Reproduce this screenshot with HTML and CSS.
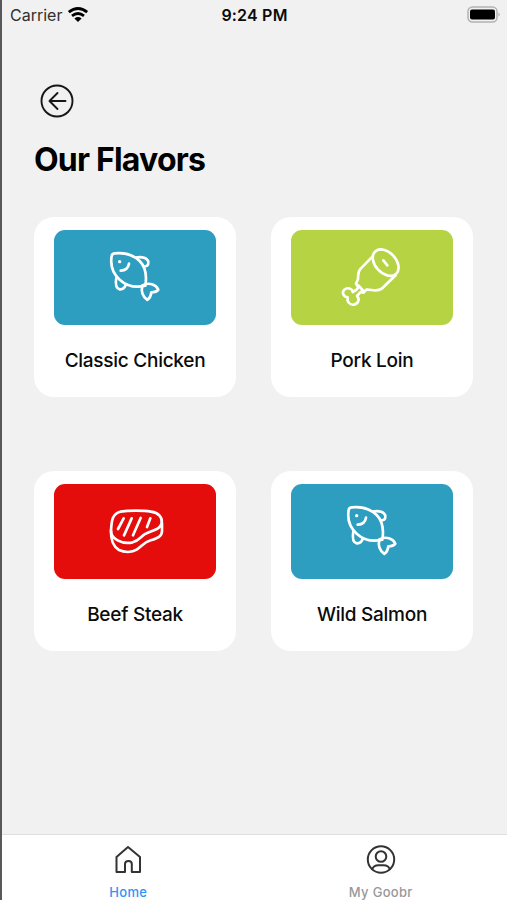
FILE: index.html
```html
<!DOCTYPE html>
<html lang="en">
<head>
<meta charset="utf-8">
<title>Our Flavors</title>
<link rel="stylesheet" href="styles.css">
</head>
<body>
<svg width="0" height="0" class="defs">
  <symbol id="fish" viewBox="0 0 240 210">
    <path d="M58 40C86 37 115 44 134 63C151 80 156 106 151 137C122 144 95 138 74 119C52 99 46 72 50 48Q51 41 58 40Z"/>
    <path d="M122 53C142 48 157 55 160 65C161 78 155 80 145 78M64 112C61 130 63 146 74 148C86 149 90 142 93 133"/>
    <path d="M142 136C162 126 183 133 190 149C184 157 177 157 169 157C168 166 164 175 157 180C143 170 138 153 142 136Z"/>
    <path d="M77 92C91 91 100 83 102 71"/>
    <circle class="eye" cx="74" cy="65" r="5"/>
  </symbol>
  <symbol id="pork" viewBox="0 0 240 210">
    <ellipse cx="167" cy="68" rx="46" ry="31" transform="rotate(47 167 68)"/>
    <path d="M128 49L92 86C84 95 84 103 84 117L78 131L85 143C81 150 74 153 68 156C67 145 52 141 43 149C34 158 41 171 53 172C50 184 59 196 72 194C87 191 89 176 81 168L93 155L101 158L109 149C122 147 141 157 155 146L197 106M160 61L172 76M85 136L102 154"/>
  </symbol>
  <symbol id="steak" viewBox="0 0 240 195">
    <path d="M76 35C101 31 145 31 168 35C191 38 203 52 200 69C197 88 174 91 152 101C137 109 132 122 113 127C81 134 46 116 48 91C50 68 49 42 76 35Z"/>
    <path d="M48 92C47 119 53 139 72 150C88 158 111 158 125 149C143 137 147 127 167 121C188 114 201 109 201 93V70"/>
    <path d="M86 55L69 87M110 55L87 106M137 54L114 106M166 55L156 81"/>
  </symbol>
</svg>
<div class="screen">
  <header class="status">
    <div class="carrier"><span>Carrier</span>
      <svg width="22" height="16" viewBox="0 0 22 16"><path class="wifi" d="M1.8 5.2Q11-2.2 20.2 5.2M5 8.8Q11 4.2 17 8.8"/><path d="M7.4 11.4Q11 8.5 14.6 11.4L11 15Z"/></svg>
    </div>
    <div class="time">9:24 PM</div>
    <svg class="battery" width="34" height="18" viewBox="0 0 34 18"><rect class="shell" x="1" y="1" width="29" height="15" rx="4.5"/><rect x="3" y="3.5" width="25" height="10" rx="2"/><path class="cap" d="M31.5 6.5Q34 8.5 31.5 10.5Z"/></svg>
  </header>
  <main>
    <svg class="back" width="34" height="34" viewBox="0 0 34 34"><circle cx="17" cy="17" r="15.5"/><path d="M25.5 17H9.5M17.5 9L9.5 17L17.5 25"/></svg>
    <h1>Our Flavors</h1>
    <section class="grid">
      <article class="card"><div class="picture blue"><svg width="80" height="70"><use href="#fish"/></svg></div><h2>Classic Chicken</h2></article>
      <article class="card"><div class="picture green"><svg class="left" width="80" height="70"><use href="#pork"/></svg></div><h2>Pork Loin</h2></article>
      <article class="card"><div class="picture red"><svg class="low" width="80" height="65"><use href="#steak"/></svg></div><h2>Beef Steak</h2></article>
      <article class="card"><div class="picture blue"><svg width="80" height="70"><use href="#fish"/></svg></div><h2>Wild Salmon</h2></article>
    </section>
  </main>
  <nav>
    <a class="active"><svg width="30" height="30" viewBox="0 0 30 30"><path d="M3.5 12L15 2L27 12V27H18.8V19Q18.8 16 15.5 16Q12 16 12 19V27H3.5Z"/></svg><span>Home</span></a>
    <a><svg width="30" height="30" viewBox="0 0 30 30"><circle cx="15" cy="14.5" r="13.2"/><circle cx="15" cy="11.5" r="5.3"/><path d="M6.3 24.2C7.3 20.8 9.5 20.2 12.5 20.2H17.5C20.5 20.2 22.7 20.8 23.7 24.2"/></svg><span>My Goobr</span></a>
  </nav>
</div>
</body>
</html>
```

FILE: styles.css
```css
* { box-sizing: border-box; }
body { margin: 0; background: #f1f1f1; font-family: Inter, "Liberation Sans", sans-serif; color: #0b0b0b; }
.defs { position: absolute; }
.screen { height: 900px; border-left: 2px solid #59595b; display: flex; flex-direction: column; overflow: hidden; }
.status { height: 30px; display: grid; grid-template-columns: 1fr auto 1fr; align-items: center; padding: 0 8px 0 8px; }
.carrier { display: flex; align-items: center; gap: 5px; font-size: 16px; color: #303030; }
.wifi { fill: none; stroke: #000; stroke-width: 2.8; }
.time { font-size: 16px; font-weight: 600; letter-spacing: .2px; }
.battery { justify-self: end; margin-right: -2px; }
.shell { fill: #f1f1f1; stroke: #b3b3b3; stroke-width: 1.5; }
.cap { fill: #aaa; }
main { flex: 1; padding: 54px 34px 0 32px; }
.back { display: block; margin-left: 6px; fill: none; stroke: #171717; stroke-width: 1.9; stroke-linecap: round; stroke-linejoin: round; }
h1 { margin: 22px 0 0; font-size: 32px; line-height: 40px; font-weight: 700; letter-spacing: -.8px; color: #000; white-space: nowrap; }
.grid { display: grid; grid-template-columns: 202px 202px; column-gap: 35px; row-gap: 74px; margin-top: 37px; }
.card { height: 180px; padding: 13px 20px 0; border-radius: 20px; background: #fff; }
.picture { height: 95px; border-radius: 11px; display: flex; justify-content: center; }
.picture svg { margin-top: 10px; fill: none; stroke: #fff; stroke-width: 8; stroke-linecap: round; stroke-linejoin: round; }
.picture .left { margin-right: 4px; }
.picture .low { margin-top: 16px; }
.eye { fill: #fff; stroke: none; }
.blue { background: #2e9ec0; }
.green { background: #b6d343; }
.red { background: #e50c0c; }
h2 { margin: 23px -10px 0; text-align: center; font-size: 19px; line-height: 26px; font-weight: 500; letter-spacing: -.27px; white-space: nowrap; }
nav { height: 66px; background: #fff; border-top: 1px solid #dedede; display: grid; grid-template-columns: 1fr 1fr; }
nav a { display: flex; flex-direction: column; align-items: center; padding-top: 10px; color: #999; font-size: 13px; line-height: 16px; font-weight: 500; }
nav svg { fill: none; stroke: #333; stroke-width: 2; stroke-linejoin: round; stroke-linecap: round; }
nav span { margin-top: 9px; letter-spacing: .3px; }
nav .active { color: #3193f5; }
```
